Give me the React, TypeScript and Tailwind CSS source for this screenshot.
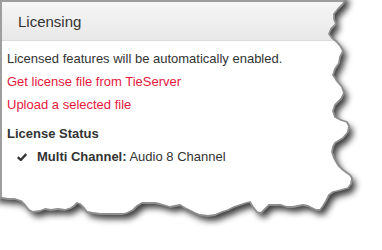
import React from "react";

const torn: [number, number][] = [
  [345, 0], [343, 4], [338, 9], [334, 14], [334, 19], [336, 24], [331, 29], [329, 34], [332, 38], [337, 42],
  [341, 47], [343, 51], [340, 57], [339, 63], [335, 69], [333, 75], [337, 81], [342, 87], [344, 93], [341, 99],
  [335, 105], [333, 111], [335, 117], [341, 120], [347, 122], [349, 126], [348, 132], [343, 138], [335, 143],
  [333, 147], [332, 152], [334, 158], [338, 165], [343, 170], [350, 175], [352, 178], [351, 184], [348, 188],
  [341, 190], [333, 192], [329, 195], [326, 201], [323, 206], [320, 210], [316, 210], [312, 208], [308, 206],
  [303, 205], [298, 206], [293, 207], [287, 207], [281, 205], [275, 205], [269, 205], [265, 209], [261, 213],
  [257, 212], [253, 207], [250, 202], [246, 203], [240, 205], [234, 207], [228, 210], [222, 212], [215, 215],
  [208, 216], [200, 215], [195, 213], [191, 211], [185, 208], [180, 205], [175, 206], [170, 207], [160, 204],
  [155, 203], [148, 203], [142, 203], [137, 206], [133, 210], [127, 213], [123, 214], [112, 214], [100, 214],
  [93, 213], [87, 212], [84, 208], [80, 204], [77, 203], [74, 206], [71, 208], [65, 210], [58, 209], [51, 210],
  [45, 209], [40, 211], [33, 212], [29, 210], [25, 205], [21, 201], [15, 199], [8, 199], [2, 198], [0, 198],
];

const tornD = "M" + torn.map(([x, y]) => `${x},${y}`).join(" L");
const paperD = "M-6,-6 L345,-6 L" + torn.map(([x, y]) => `${x},${y}`).join(" L") + " L-6,198 Z";
const outsideD = "M-20,-20 L410,-20 L410,280 L-20,280 Z " + paperD;

function TornEdge() {
  return (
    <svg
      className="absolute inset-0 pointer-events-none"
      width={382}
      height={250}
      viewBox="0 0 382 250"
    >
      <defs>
        <clipPath id="outsideClip">
          <path d={outsideD} clipRule="evenodd" />
        </clipPath>
        <filter id="shadowBlur" x="-20%" y="-20%" width="140%" height="140%">
          <feGaussianBlur stdDeviation="3" />
        </filter>
      </defs>
      <path d={outsideD} fill="#ffffff" fillRule="evenodd" />
      <g clipPath="url(#outsideClip)">
        <path d={paperD} transform="translate(4,5)" fill="#000" fillOpacity="0.75" filter="url(#shadowBlur)" />
      </g>
      <path d={tornD} fill="none" stroke="#8f8f8f" strokeWidth="1.8" strokeLinejoin="round" />
    </svg>
  );
}

export default function App() {
  return (
    <div className="relative w-[382px] h-[250px] overflow-hidden bg-white font-['Liberation_Sans',Arial,sans-serif] text-[#333]">
      <div className="w-[362px] h-[240px] border-t-2 border-l-2 border-[#9e9e9e]">
        <div className="h-[39px] border-b border-[#dadada] bg-gradient-to-b from-[#f6f6f6] to-[#e8e8e8] pl-4 pt-[10px] text-[15px] leading-[20px]">
          Licensing
        </div>
        <div className="pl-[5px] pt-[6px] text-[13px] leading-[23px]">
          <p>Licensed features will be automatically enabled.</p>
          <a className="block text-[#e4183c]">Get license file from TieServer</a>
          <a className="block text-[#e4183c]">Upload a selected file</a>
          <h4 className="mt-[6px] font-bold">License Status</h4>
          <div className="flex items-center">
            <svg className="ml-[10px] mr-[10px]" width="10" height="8" viewBox="0 0 10 8">
              <path d="M0.8 4.2 L3.8 7 L9.2 1.1" fill="none" stroke="#333" strokeWidth="2.3" />
            </svg>
            <span>
              <span className="font-bold">Multi Channel:</span> Audio 8 Channel
            </span>
          </div>
        </div>
      </div>
      <TornEdge />
    </div>
  );
}
